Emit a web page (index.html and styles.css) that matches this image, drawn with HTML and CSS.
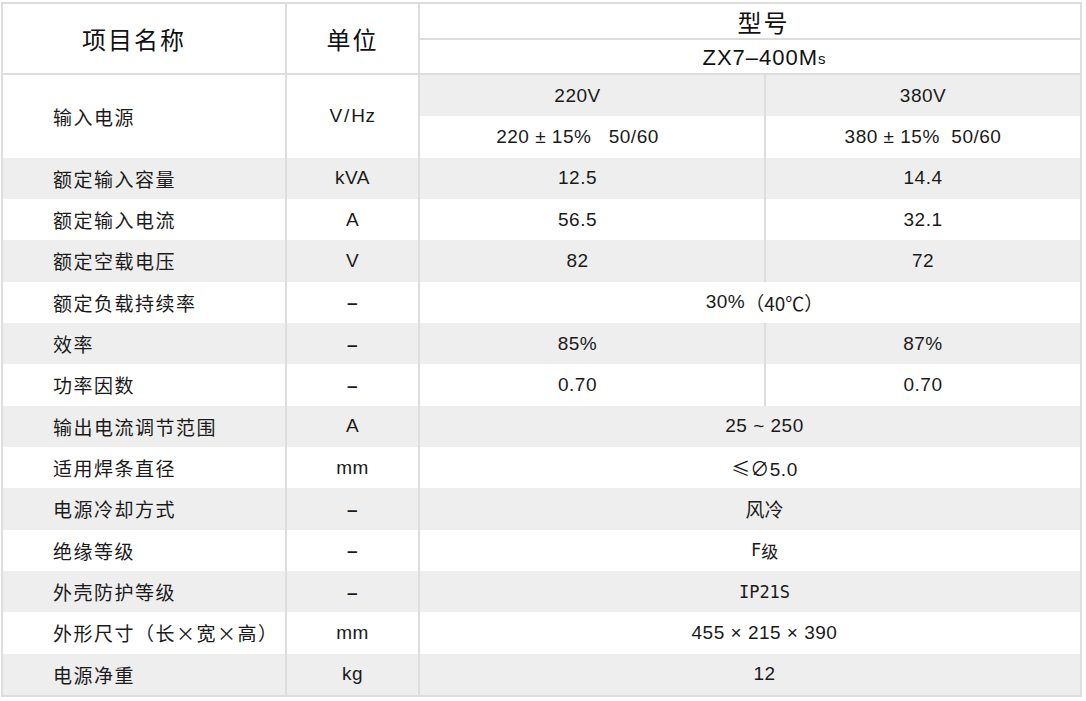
FILE: index.html
```html
<!DOCTYPE html>
<html lang="zh-CN">
<head>
<meta charset="utf-8">
<title>ZX7-400Ms 技术参数</title>
<link rel="stylesheet" href="styles.css">
</head>
<body>
<div class="spec">
  <div class="c hd name">项目名称</div>
  <div class="c hd unit-h">单位</div>
  <div class="c hd model span2">型号</div>
  <div class="c hd sub span2">ZX7–400M<span class="small">s</span></div>

  <div class="c label tall">输入电源</div>
  <div class="c unit tall">V<span class="sl">/</span>Hz</div>
  <div class="c val v1 alt">220V</div>
  <div class="c val v2 alt">380V</div>
  <div class="c val v1">220 ± 15%&nbsp;&nbsp; 50/60</div>
  <div class="c val v2">380 ± 15%&nbsp; 50/60</div>

  <div class="row alt">
    <div class="c label">额定输入容量</div>
    <div class="c unit">kVA</div>
    <div class="c val v1">12.5</div>
    <div class="c val v2">14.4</div>
  </div>
  <div class="row">
    <div class="c label">额定输入电流</div>
    <div class="c unit">A</div>
    <div class="c val v1">56.5</div>
    <div class="c val v2">32.1</div>
  </div>
  <div class="row alt">
    <div class="c label">额定空载电压</div>
    <div class="c unit">V</div>
    <div class="c val v1">82</div>
    <div class="c val v2">72</div>
  </div>
  <div class="row">
    <div class="c label">额定负载持续率</div>
    <div class="c unit dash">–</div>
    <div class="c val span2">30%<span class="cjk">（40℃）</span></div>
  </div>
  <div class="row alt">
    <div class="c label">效率</div>
    <div class="c unit dash">–</div>
    <div class="c val v1">85%</div>
    <div class="c val v2">87%</div>
  </div>
  <div class="row">
    <div class="c label">功率因数</div>
    <div class="c unit dash">–</div>
    <div class="c val v1">0.70</div>
    <div class="c val v2">0.70</div>
  </div>
  <div class="row alt">
    <div class="c label">输出电流调节范围</div>
    <div class="c unit">A</div>
    <div class="c val span2">25 ~ 250</div>
  </div>
  <div class="row">
    <div class="c label">适用焊条直径</div>
    <div class="c unit">mm</div>
    <div class="c val span2"><span class="cjk">≤</span>∅5.0</div>
  </div>
  <div class="row alt">
    <div class="c label">电源冷却方式</div>
    <div class="c unit dash">–</div>
    <div class="c val span2 cjk">风冷</div>
  </div>
  <div class="row">
    <div class="c label">绝缘等级</div>
    <div class="c unit dash">–</div>
    <div class="c val span2 mono">F<span class="cjk">级</span></div>
  </div>
  <div class="row alt">
    <div class="c label">外壳防护等级</div>
    <div class="c unit dash">–</div>
    <div class="c val span2 mono">IP21S</div>
  </div>
  <div class="row">
    <div class="c label">外形尺寸（长×宽×高）</div>
    <div class="c unit">mm</div>
    <div class="c val span2">455 × 215 × 390</div>
  </div>
  <div class="row alt">
    <div class="c label">电源净重</div>
    <div class="c unit">kg</div>
    <div class="c val span2">12</div>
  </div>
</div>
</body>
</html>
```
FILE: styles.css
```css
html, body {
  margin: 0;
  background: #ffffff;
}

body {
  font-family: "Liberation Sans", "Noto Sans CJK SC", sans-serif;
  color: #1a1a1a;
}

.spec {
  display: grid;
  width: max-content;
  margin: 2px 0 0 1px;
  border: 2px solid #dddddd;
  background: #dddddd;
  column-gap: 2px;
  row-gap: 0;
  grid-template-columns: 282px 131px 344px 314px;
  grid-template-rows: 36px 35px repeat(15, 41.333px);
}

.row {
  display: contents;
}

.c {
  box-sizing: border-box;
  display: flex;
  align-items: center;
  justify-content: center;
  background: #ffffff;
  font-size: 19px;
  letter-spacing: 0.5px;
  white-space: pre;
  min-width: 0;
}

.alt,
.row.alt > .c {
  background: #eeeeee;
}

/* header */
.hd {
  color: #111111;
  border-bottom: 2px solid #dddddd;
}

.name,
.unit-h {
  grid-row: span 2;
  font-size: 24px;
  letter-spacing: 2px;
  padding-top: 0;
  font-family: "Noto Sans CJK SC", sans-serif;
}

.name {
  padding-right: 20px;
}

.model {
  font-size: 24px;
  letter-spacing: 2px;
  font-family: "Noto Sans CJK SC", sans-serif;
  padding-left: 27px;
}

.sub {
  font-size: 22px;
  letter-spacing: 1px;
  padding-left: 29px;
  padding-top: 3px;
}

.sub .small {
  font-size: 15px;
}

.span2 {
  grid-column: span 2;
}

/* body */
.label {
  justify-content: flex-start;
  padding-left: 50px;
  font-family: "Noto Sans CJK SC", sans-serif;
  letter-spacing: 1.5px;
}

.tall {
  grid-row: span 2;
}

.unit .sl {
  margin: 0 1.5px;
}

.dash {
  font-weight: 700;
  padding-top: 2px;
}

.v1 {
  padding-right: 29px;
}

.val.span2 {
  padding-left: 29px;
}

.cjk {
  font-family: "Noto Sans CJK SC", sans-serif;
  letter-spacing: 0;
}

.mono {
  font-family: "DejaVu Sans Mono", "Noto Sans CJK SC", monospace;
  font-size: 17px;
  letter-spacing: 0;
}
```
